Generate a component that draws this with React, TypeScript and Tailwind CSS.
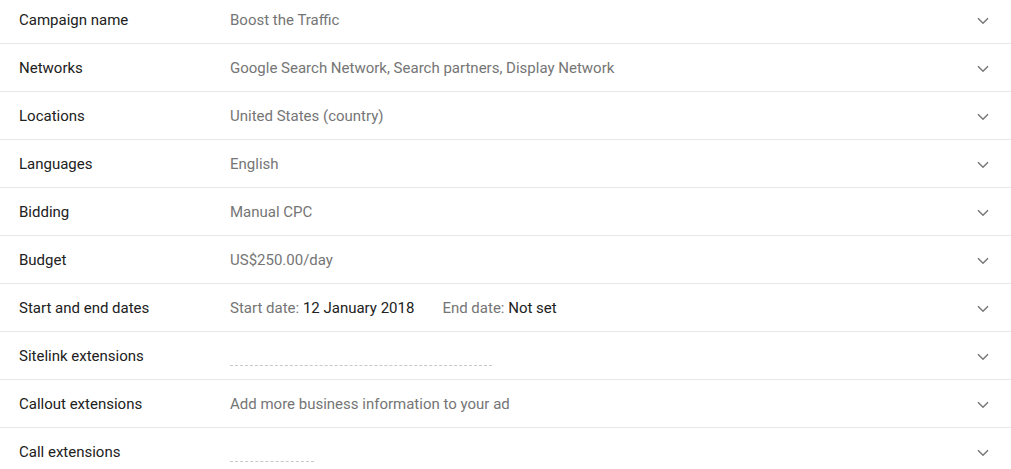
import { ReactNode } from "react";

interface RowProps {
  label: string;
  children?: ReactNode;
}

function Chevron() {
  return (
    <svg
      viewBox="0 0 12 8"
      className="w-[12px] h-[8px]"
      fill="none"
      stroke="#7a7a7a"
      strokeWidth="1.6"
      aria-hidden="true"
    >
      <path d="M1 1.2 L6 6.2 L11 1.2" />
    </svg>
  );
}

function Row({ label, children }: RowProps) {
  return (
    <div className="flex items-center h-[48px] pt-[2px] border-b border-[#e8e8e8]">
      <div className="w-[230px] pl-[19px] text-[#212121]">{label}</div>
      <div className="flex-1 text-[#757575]">{children}</div>
      <div className="w-[56px] flex justify-center">
        <Chevron />
      </div>
    </div>
  );
}

export default function App() {
  return (
    <div
      className="w-[1011px] h-[469px] overflow-hidden bg-white text-[15px]"
      style={{ fontFamily: "Roboto, 'Liberation Sans', sans-serif" }}
    >
      <div className="-mt-[4px]">
        <Row label="Campaign name">Boost the Traffic</Row>
        <Row label="Networks">Google Search Network, Search partners, Display Network</Row>
        <Row label="Locations">United States (country)</Row>
        <Row label="Languages">English</Row>
        <Row label="Bidding">Manual CPC</Row>
        <Row label="Budget">US$250.00/day</Row>
        <Row label="Start and end dates">
          Start date: <span className="text-[#212121]">12 January 2018</span>
          <span className="ml-[28px]">End date: </span>
          <span className="text-[#212121]">Not set</span>
        </Row>
        <Row label="Sitelink extensions">
          <div className="w-[262px] mt-[18px] border-b border-dashed border-[#c8c8c8]" />
        </Row>
        <Row label="Callout extensions">Add more business information to your ad</Row>
        <Row label="Call extensions">
          <div className="w-[84px] mt-[18px] border-b border-dashed border-[#c8c8c8]" />
        </Row>
      </div>
    </div>
  );
}
